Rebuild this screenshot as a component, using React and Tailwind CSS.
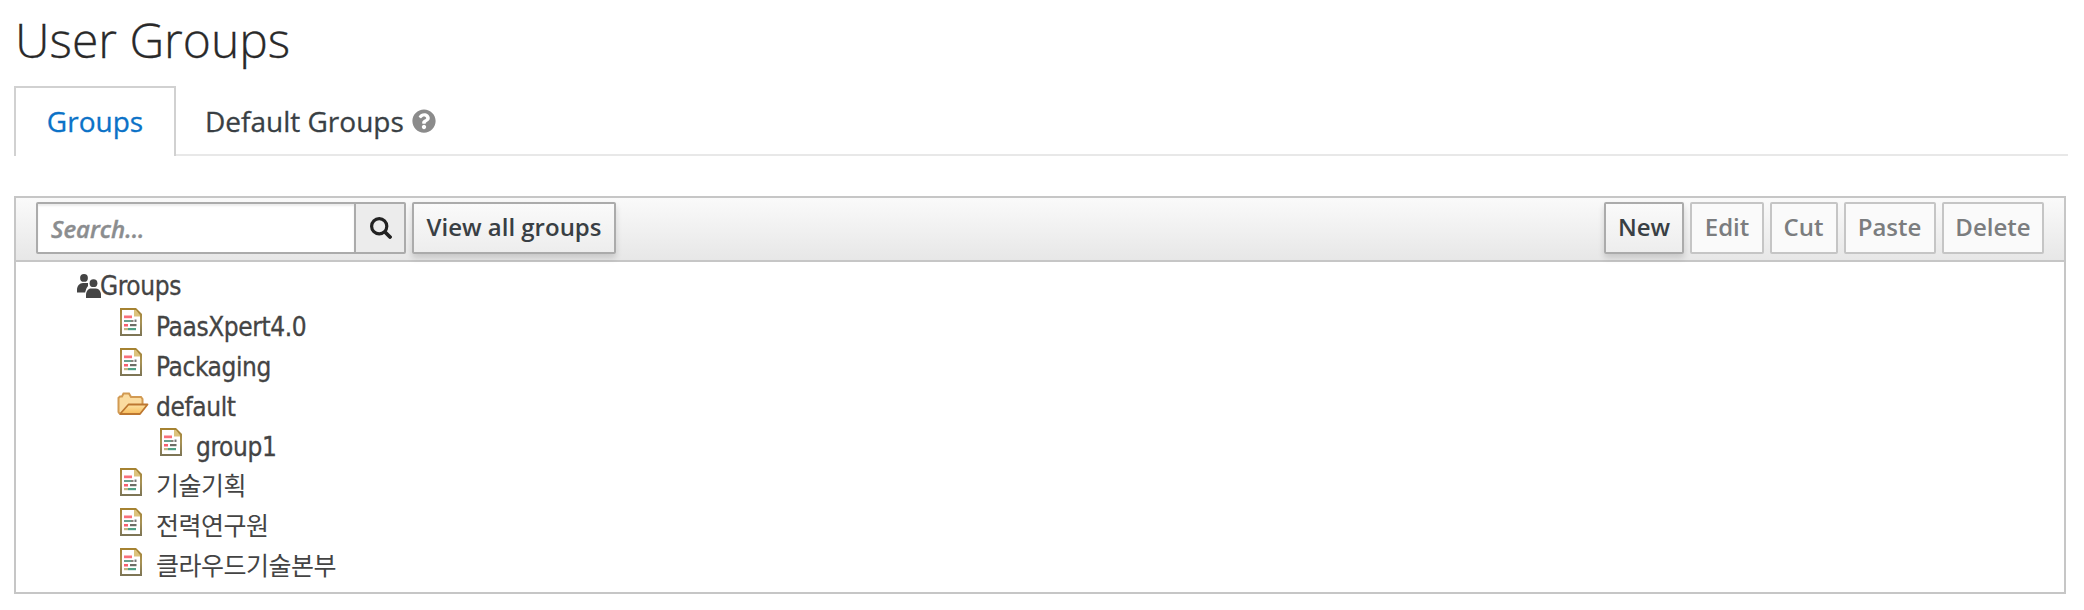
import React from "react";
import { FaQuestionCircle } from "react-icons/fa";

function DocIcon() {
  return (
    <svg className="block h-[28px] w-[22px]" viewBox="0 0 22 28">
      <defs>
        <linearGradient id="docEdge" x1="0" y1="0" x2="0" y2="1">
          <stop offset="0" stopColor="#a5812f" />
          <stop offset="0.5" stopColor="#a89355" />
          <stop offset="1" stopColor="#7a7355" />
        </linearGradient>
      </defs>
      <path d="M0 0H16L22 6V28H0Z" fill="url(#docEdge)" />
      <path d="M2 2H14V8H20V26H2Z" fill="#fff" />
      <path d="M14 2H16L20 7V8.500H14Z" fill="#dcc27c" />
      <rect x="4" y="7.500" width="8" height="2.700" fill="#f8707a" />
      <rect x="4" y="12" width="7" height="2" fill="#6aa08c" />
      <rect x="11" y="12" width="2.500" height="2" fill="#85877c" />
      <rect x="14.500" y="11.500" width="2" height="2.500" fill="#777" />
      <rect x="4" y="16" width="4" height="2.500" fill="#f8606c" />
      <rect x="10" y="16" width="6.500" height="2.200" fill="#6d6d66" />
      <rect x="4" y="20" width="4" height="2.200" fill="#c3b681" />
      <rect x="8" y="20" width="8" height="2.200" fill="#4fa085" />
    </svg>
  );
}

function FolderIcon() {
  return (
    <svg className="block h-[24px] w-[32px]" viewBox="0 0 32 24">
      <defs>
        <linearGradient id="folderFill" x1="0" y1="0" x2="0" y2="1">
          <stop offset="0" stopColor="#fde3a4" />
          <stop offset="1" stopColor="#f8bb59" />
        </linearGradient>
      </defs>
      <path d="M2.500 21.500L1.500 20V6L3 4.500H5L6.500 1.500H12L14 5H24L25.500 7V12" fill="#fbdca0" stroke="#d29a52" strokeWidth="2" />
      <path d="M11.500 12.500H30.500L23 22H3Z" fill="url(#folderFill)" stroke="#bd7730" strokeWidth="1.800" strokeLinejoin="round" />
    </svg>
  );
}

function UsersIcon() {
  return (
    <svg className="block h-[24px] w-[24px]" viewBox="0 0 24 24" fill="#444">
      <circle cx="7" cy="3.900" r="3.900" />
      <path d="M0 18.500V16C0 12 2.500 9 6 9H11V12C9.500 14 8.500 16 8.500 18.500Z" />
      <g stroke="#fff" strokeWidth="2" paintOrder="stroke">
        <path d="M9 24V21C9 17 11.500 14.500 14 14.500H19C22 14.500 24 17.500 24 21V24Z" />
        <circle cx="16.500" cy="9.200" r="3.900" />
      </g>
    </svg>
  );
}

function ToolButton({ children, disabled, className }) {
  const look = disabled
    ? "border-[#c5c5c5] bg-[#fafafa] text-[#7b7d7f]"
    : "border-[#ababab] bg-linear-to-b from-[#fafafa] to-[#ededed] text-[#393f44] shadow-[0_4px_6px_rgba(3,3,3,0.14)]";
  return (
    <button
      className={`flex h-[52px] items-center justify-center rounded-[2px] border-2 pb-[2px] text-[24px] font-semibold whitespace-nowrap ${look} ${className}`}
    >
      {children}
    </button>
  );
}

const latin = "pt-px text-[26px] tracking-[-0.4px] [-webkit-text-stroke:0.3px_#444]";
const hangul = "text-[25px] tracking-[-0.5px]";

const nodes = [
  { name: "PaasXpert4.0", cls: latin },
  { name: "Packaging", cls: latin },
  { name: "default", folder: true, cls: latin },
  { name: "group1", nested: true, cls: latin },
  { name: "기술기획", cls: hangul },
  { name: "전력연구원", cls: hangul },
  { name: "클라우드기술본부", cls: hangul },
];

export default function App() {
  return (
    <div className="h-[610px] w-[2084px] overflow-hidden bg-white pl-[14px] font-['Open_Sans',sans-serif]">
      <h1 className="h-[86px] pt-[13px] pl-px text-[48px] leading-[53px] font-light text-[#292929] [-webkit-text-stroke:0.3px_#292929]">User Groups</h1>

      <div className="flex h-[70px] w-[2054px]">
        <div className="flex w-[162px] items-center justify-center border-2 border-b-0 border-[#d1d1d1] pb-[2px] text-[28px] text-[#0b72c7] [-webkit-text-stroke:0.3px_#0b72c7]">
          Groups
        </div>
        <div className="flex flex-1 items-center border-b-2 border-[#e8e8e8] pt-[2px] pl-[29px] text-[28px] text-[#393f44]">
          <span className="[-webkit-text-stroke:0.3px_#393f44]">Default Groups</span>
          <FaQuestionCircle className="ml-[8px] size-[24px] text-[#8b8b8b]" />
        </div>
      </div>

      <div className="mt-[40px] h-[398px] w-[2052px] border-2 border-[#c6c6c6]">
        <div className="flex h-[64px] items-start border-b-2 border-[#c6c6c6] bg-linear-to-b from-[#fafafa] to-[#e7e7e7] pt-[4px] pr-[20px] pl-[20px]">
          <div className="flex h-[52px] w-[370px] rounded-[2px] border-2 border-[#ababab] bg-white">
            <div className="flex flex-1 items-center pt-[2px] pl-[13px] text-[24px] font-semibold text-[#8b8d8f] italic shadow-[inset_0_2px_2px_rgba(3,3,3,0.075)] [-webkit-text-stroke:0.4px_#8b8d8f]">
              Search...
            </div>
            <div className="flex w-[50px] items-center justify-center border-l-2 border-[#ababab] bg-[#ececec] pl-px">
              <svg className="h-[22px] w-[22px]" viewBox="0 0 22 22" fill="none" stroke="#222" strokeLinecap="round">
                <circle cx="9.200" cy="9.200" r="7.600" strokeWidth="3.200" />
                <path d="M15.500 15.500L20 20" strokeWidth="3.800" />
              </svg>
            </div>
          </div>
          <ToolButton className="ml-[6px] w-[204px]">View all groups</ToolButton>
          <div className="ml-auto flex gap-[6px]">
            <ToolButton className="w-[80px]">New</ToolButton>
            <ToolButton disabled className="w-[74px]">Edit</ToolButton>
            <ToolButton disabled className="w-[68px] pr-px">Cut</ToolButton>
            <ToolButton disabled className="w-[92px] pr-px">Paste</ToolButton>
            <ToolButton disabled className="w-[102px]">Delete</ToolButton>
          </div>
        </div>

        <div className="pt-[4px] pl-[61px] font-['DejaVu_Sans_Condensed','DejaVu_Sans','Noto_Sans_CJK_KR',sans-serif] text-[#444]">
          <div className="flex h-[40px] items-center">
            <UsersIcon />
            <span className={`-ml-px ${latin}`}>Groups</span>
          </div>
          {nodes.map((n) => (
            <div key={n.name} className={`flex h-[40px] ${n.nested ? "pl-[80px]" : "pl-[40px]"}`}>
              <div className={`w-[39px] shrink-0 ${n.folder ? "pt-[6px]" : "pt-[2px] pl-[3px]"}`}>
                {n.folder ? <FolderIcon /> : <DocIcon />}
              </div>
              <span className={`leading-[41px] whitespace-nowrap ${n.cls}`}>{n.name}</span>
            </div>
          ))}
        </div>
      </div>
    </div>
  );
}
